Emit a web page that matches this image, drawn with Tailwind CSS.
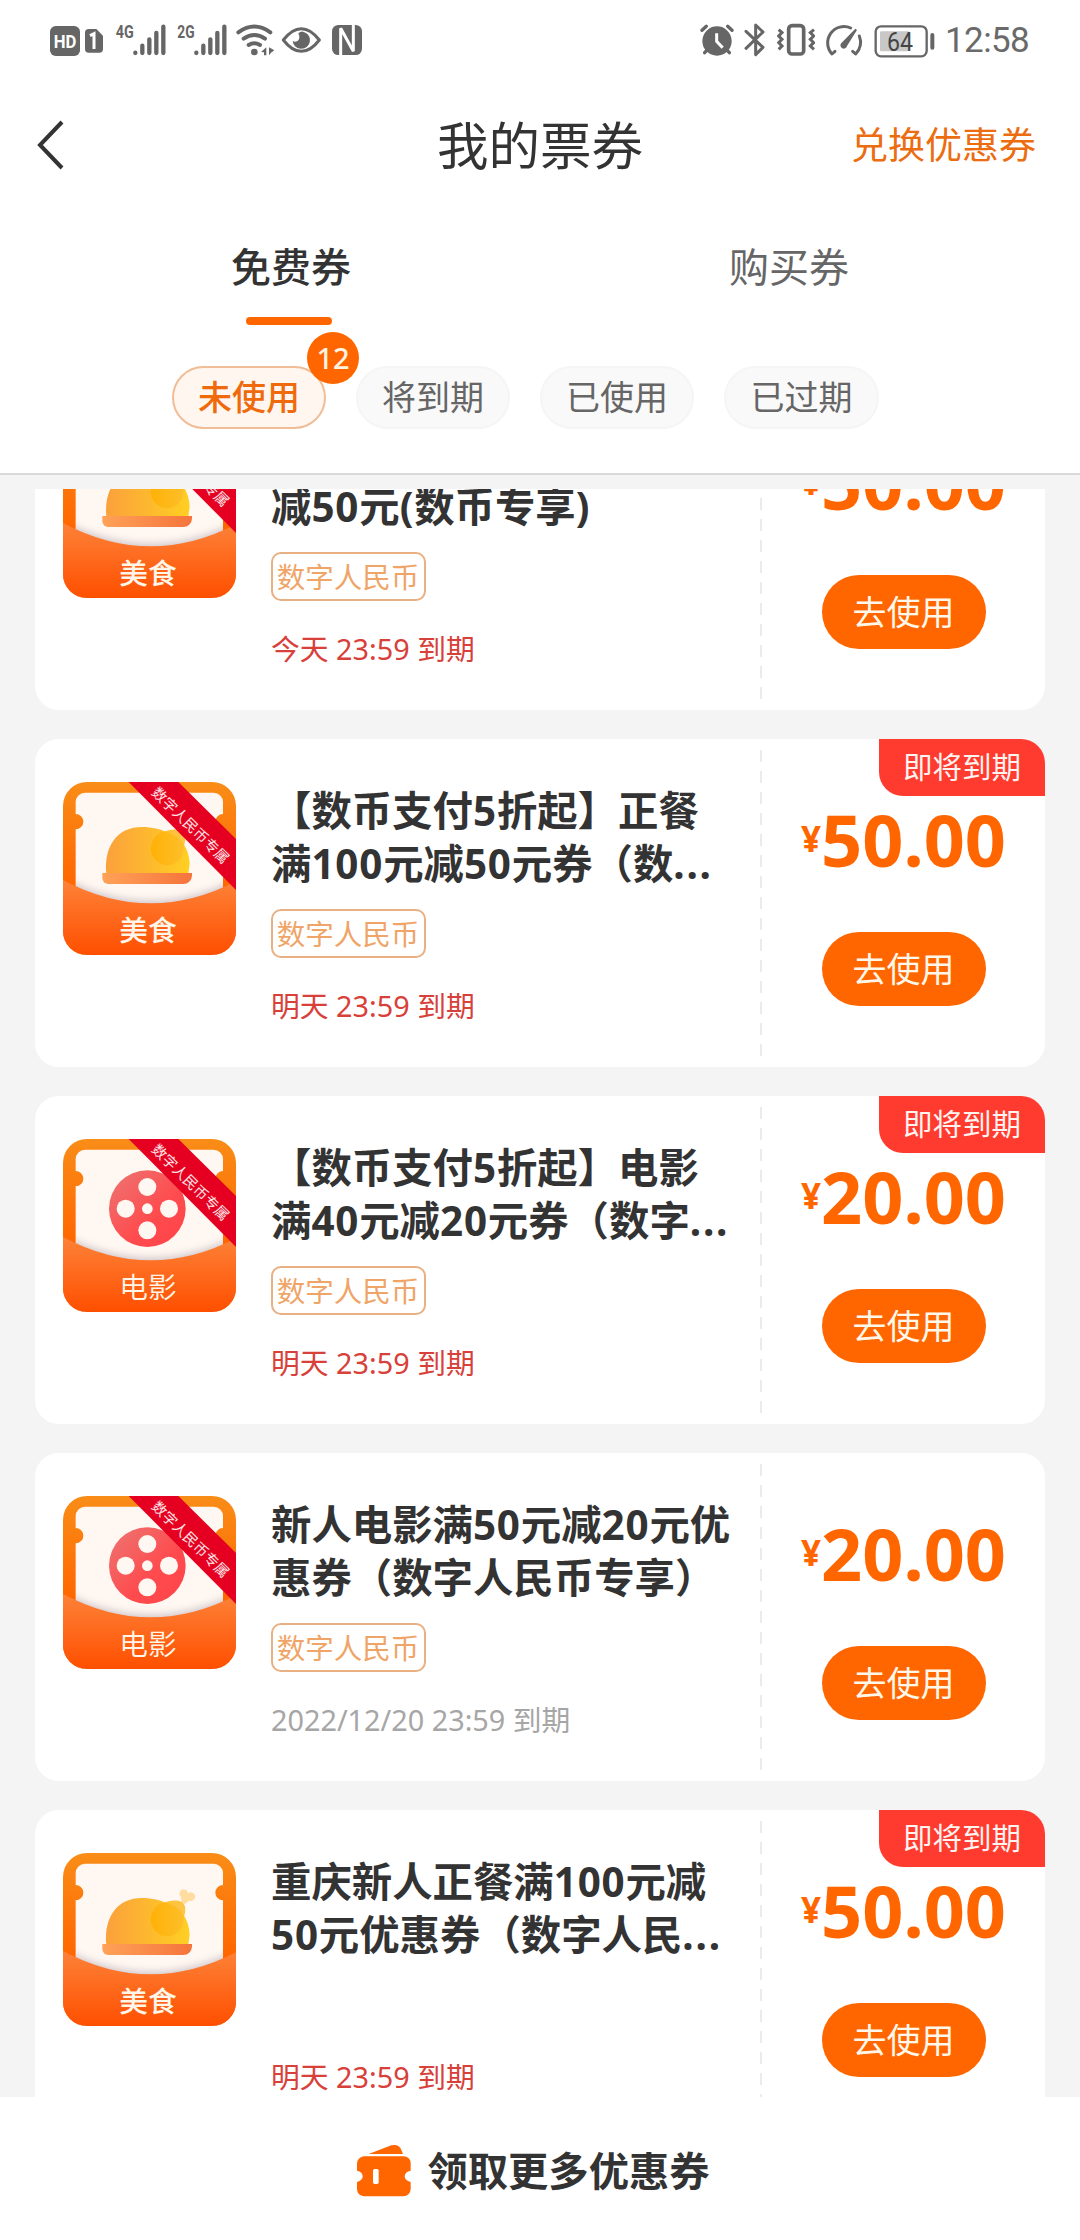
<!DOCTYPE html>
<html lang="zh-CN">
<head>
<meta charset="utf-8">
<title>我的票券</title>
<script src="https://cdn.jsdelivr.net/npm/@tailwindcss/browser@4"></script>
</head>
<body class="bg-white">
<svg width="0" height="0" class="absolute" aria-hidden="true">
  <defs>
    <linearGradient id="frame" x1="0" y1="0" x2="0" y2="1"><stop offset="0" stop-color="#f98d17"/><stop offset=".6" stop-color="#ff6600"/></linearGradient>
    <linearGradient id="pocket" x1="0" y1="0" x2="0" y2="1"><stop offset="0" stop-color="#fd8238"/><stop offset="1" stop-color="#ff4f00"/></linearGradient>
    <linearGradient id="bird" x1="0" y1="0" x2="1" y2="0"><stop offset="0" stop-color="#fba13c"/><stop offset="1" stop-color="#ffcf22"/></linearGradient>
    <linearGradient id="leg" x1="0" y1="0" x2="1" y2="0"><stop offset="0" stop-color="#ffb000"/><stop offset="1" stop-color="#fdbd2c"/></linearGradient>
    <linearGradient id="plate" x1="0" y1="0" x2="1" y2="0"><stop offset="0" stop-color="#ffa257"/><stop offset="1" stop-color="#f5743c"/></linearGradient>
    <linearGradient id="reel" x1="0" y1="0" x2="1" y2="1"><stop offset="0" stop-color="#ec7673"/><stop offset=".6" stop-color="#ff4b4e"/><stop offset="1" stop-color="#ff4448"/></linearGradient>
    <filter id="soft" x="-10%" y="-30%" width="120%" height="160%"><feGaussianBlur stdDeviation="12"/></filter>
    <clipPath id="tile"><rect width="519" height="519" rx="72"/></clipPath>
    <clipPath id="ticketclip"><path d="M66 32H452A28 28 0 0 1 480 60V96A23 23 0 0 0 480 142V519H38V142A23 23 0 0 0 38 96V60A28 28 0 0 1 66 32Z"/></clipPath>
    <symbol id="base" viewBox="0 0 519 519">
      <rect width="519" height="519" fill="url(#frame)"/>
      <path d="M66 32H452A28 28 0 0 1 480 60V96A23 23 0 0 0 480 142V519H38V142A23 23 0 0 0 38 96V60A28 28 0 0 1 66 32Z" fill="#fff8f2"/>
    </symbol>
    <symbol id="food" viewBox="0 0 519 519">
      <path d="M356 150L354 132A13 13 0 1 1 375 121A13 13 0 1 1 378 143L366 153Z" fill="#ffdda0"/>
      <path d="M130 275C122 190 165 135 236 135C270 135 292 142 310 150C350 160 378 195 380 245L376 275Z" fill="url(#bird)"/>
      <path d="M300 150C318 143 340 139 356 147C370 155 369 175 362 195C362 228 340 250 313 250A51 51 0 0 1 263 199C264 172 285 152 300 150Z" fill="url(#leg)" opacity=".85"/>
      <path d="M118 273H387V280A26 26 0 0 1 361 306H136A18 18 0 0 1 118 288Z" fill="url(#plate)"/>
    </symbol>
    <symbol id="film" viewBox="0 0 519 519">
      <circle cx="253" cy="209" r="115" fill="url(#reel)"/>
      <g fill="#fff8f2"><circle cx="253" cy="144" r="27"/><circle cx="188" cy="209" r="27"/><circle cx="318" cy="209" r="27"/><circle cx="253" cy="274" r="27"/><circle cx="253" cy="209" r="16"/></g>
    </symbol>
    <symbol id="flap" viewBox="0 0 519 519">
      <g clip-path="url(#ticketclip)"><path d="M0 290Q260 425 519 294V519H0Z" fill="#7a6a80" opacity=".4" filter="url(#soft)"/></g>
      <path d="M0 294Q260 432 519 298V519H0Z" fill="url(#pocket)"/>
    </symbol>
    <symbol id="bars" viewBox="0 0 100 96">
      <g stroke="#666" stroke-width="13" stroke-linecap="round"><path d="M8 87V88M29 66V88M50 47V88M71 28V88M92 9V88"/></g>
    </symbol>
  </defs>
</svg>

<div class="flex h-[2240px] w-[1080px] flex-col overflow-hidden bg-white font-['Noto_Sans','Noto_Sans_CJK_SC',sans-serif] text-[#333]">
  <!-- status bar -->
  <div class="flex h-[80px] shrink-0 items-center justify-between pr-[50px] pl-[50px]">
    <div class="flex items-center">
      <svg class="h-9 w-[30px]" viewBox="60 66 90 108"><rect x="60" y="78" width="90" height="90" rx="17" fill="#666"/><text x="105" y="143" text-anchor="middle" textLength="68" lengthAdjust="spacingAndGlyphs" font-family="Roboto" font-weight="700" font-size="54" fill="#fff">HD</text></svg>
      <svg class="ml-[5px] h-9 w-[18px]" viewBox="164 66 54 108"><path d="M175 87H198L218 107V147Q218 158 207 158H175Q164 158 164 147V98Q164 87 175 87Z" fill="#666"/><path d="M179 107L191 101V147" fill="none" stroke="#fff" stroke-width="9"/></svg>
      <svg class="ml-[12px] h-9 w-[52px]" viewBox="254 66 156 108"><text x="256" y="114" textLength="54" lengthAdjust="spacingAndGlyphs" font-family="Roboto" font-weight="700" font-size="54" fill="#666">4G</text><use href="#bars" x="307" y="71" width="100" height="96"/></svg>
      <svg class="ml-[10px] h-9 w-[51px]" viewBox="440 66 153 108"><text x="441" y="114" textLength="52" lengthAdjust="spacingAndGlyphs" font-family="Roboto" font-weight="700" font-size="54" fill="#666">2G</text><use href="#bars" x="490" y="71" width="100" height="96"/></svg>
      <svg class="ml-[8px] h-9 w-[39px]" viewBox="617 66 117 108"><g fill="none" stroke="#666" stroke-width="12" stroke-linecap="round"><path d="M624 97Q672 62 720 97M640 116Q672 94 704 116M655 135Q672 124 689 135"/></g><circle cx="672" cy="156" r="10" fill="#666"/><path d="M692 156L708 142V166H701V157ZM732 151L716 142V166L722 158Z" fill="#666"/></svg>
      <svg class="ml-[6px] h-9 w-[40px]" viewBox="752 66 120 108"><path d="M759 120Q785 86 813 86Q841 86 867 120Q841 154 813 154Q785 154 759 120Z" fill="none" stroke="#666" stroke-width="9" stroke-linejoin="round"/><path d="M818 95A26 26 0 1 1 787 122Q792 127 800 124Q812 117 804 100Q810 94 818 95Z" fill="#666"/></svg>
      <svg class="ml-[10px] h-9 w-[32px]" viewBox="902 66 96 108"><rect x="905" y="75" width="90" height="90" rx="19" fill="#666"/><path d="M931 165V85L969 154V75" fill="none" stroke="#fff" stroke-width="9"/></svg>
    </div>
    <div class="flex items-center">
      <svg class="h-9 w-[34px]" viewBox="57 66 102 108"><circle cx="108" cy="123" r="44" fill="#666"/><path d="M63 91L76 79M153 91L140 79M80 148L71 158M136 148L145 158" stroke="#666" stroke-width="10" stroke-linecap="round"/><path d="M107 100V124L125 143" fill="none" stroke="#fff" stroke-width="9"/></svg>
      <svg class="ml-[10px] h-9 w-[22px]" viewBox="189 66 66 108"><path d="M195 94L246 142L224 164V75L246 96L195 145" fill="none" stroke="#666" stroke-width="9" stroke-linecap="round" stroke-linejoin="round"/></svg>
      <svg class="ml-[11px] h-9 w-[38px]" viewBox="288 66 114 108"><rect x="323" y="77" width="45" height="85" rx="10" fill="none" stroke="#666" stroke-width="11"/><path d="M293 89L303 98L293 108L303 118L293 128L303 138L293 148M399 89L388 98L398 108L388 118L398 128L388 138L399 148" fill="none" stroke="#666" stroke-width="9"/></svg>
      <svg class="ml-[10px] h-9 w-[38px]" viewBox="432 66 114 108"><g fill="none" stroke="#666" stroke-width="9" stroke-linecap="round" stroke-linejoin="round"><path d="M509 84A49 49 0 0 0 453 162L462 154M535 108A49 49 0 0 1 524 162L515 154"/></g><path d="M523 86L528 90L498 138A10 10 0 1 1 482 128Z" fill="#666"/></svg>
      <svg class="ml-[11px] h-9 w-[62px]" viewBox="579 66 186 108"><rect x="584" y="79" width="153" height="90" rx="16" fill="none" stroke="#666" stroke-width="7"/><rect x="597" y="94" width="88" height="60" rx="4" fill="#c8c8c8"/><rect x="748" y="99" width="12" height="50" rx="6" fill="#666"/><text x="657" y="152" text-anchor="middle" textLength="78" lengthAdjust="spacingAndGlyphs" font-family="Roboto" font-size="76" fill="#444">64</text></svg>
      <span class="ml-[9px] w-[85px] pt-[2px] font-[Roboto] text-[35px] leading-[40px] tracking-[-0.6px] whitespace-nowrap text-[#6a6a6a]">12:58</span>
    </div>
  </div>

  <!-- title bar -->
  <div class="grid h-[130px] shrink-0 grid-cols-[1fr_auto_1fr] items-center pr-[44px] pl-[36px]">
    <svg class="h-[50px] w-[28px]" viewBox="0 0 28 50" fill="none" stroke="#333" stroke-width="4"><path d="M26 2L4 25L26 48"/></svg>
    <h1 class="pl-[8px] text-[51.5px] leading-[60px] font-normal">我的票券</h1>
    <a class="justify-self-end text-[37px] leading-[44px] text-[#ec6c10]">兑换优惠券</a>
  </div>

  <!-- tabs -->
  <div class="flex h-[115px] shrink-0 px-[42px]">
    <div class="flex w-[498px] flex-col items-center pt-[27px]">
      <span class="text-[40px] leading-[60px] font-medium">免费券</span>
      <span class="mt-[20px] mr-[4px] h-[8px] w-[86px] rounded-full bg-[#ff6600]"></span>
    </div>
    <div class="flex w-[498px] flex-col items-center pt-[27px]">
      <span class="text-[40px] leading-[60px] text-[#666]">购买券</span>
    </div>
  </div>

  <!-- filters -->
  <div class="flex h-[150px] shrink-0 gap-[30px] border-b-2 border-[#d9d9d9] pt-[41px] pl-[172px] text-[34px] text-[#666]">
    <div class="relative flex h-[63px] w-[154px] items-center justify-center rounded-full border-2 border-[#f0bd97] bg-[#fff6ef] font-medium text-[#ee6a0c]">未使用
      <span class="absolute -top-[36px] -right-[35px] flex size-[52px] items-center justify-center rounded-full bg-[#ff6600] text-[29px] text-[#fff3e2]">12</span>
    </div>
    <div class="flex h-[63px] w-[154px] items-center justify-center rounded-full border-2 border-[#f5f5f5] bg-[#f9f9f9]">将到期</div>
    <div class="flex h-[63px] w-[154px] items-center justify-center rounded-full border-2 border-[#f5f5f5] bg-[#f9f9f9]">已使用</div>
    <div class="flex h-[63px] w-[155px] items-center justify-center rounded-full border-2 border-[#f5f5f5] bg-[#f9f9f9]">已过期</div>
  </div>

  <!-- coupon list -->
  <div class="h-[1622px] shrink-0 bg-[#f4f4f4] px-[35px] pt-[14px]">
    <div class="h-[1608px] overflow-hidden">
      <div id="list" class="-mt-[107px] flex flex-col gap-[29px]"></div>
    </div>
  </div>

  <!-- footer -->
  <div class="flex h-[143px] shrink-0 items-center justify-center pt-[4px] pr-[14px]">
    <svg class="h-[54px] w-[56px]" viewBox="170 186 168 162"><path d="M208 216L276 190Q300 184 307 206L311 216Z" fill="#ff6600"/><path d="M194 223H314Q334 225 334 245V266Q316 270 316 283Q316 296 334 300V322Q332 342 312 343H194Q174 341 173 321V300Q190 296 190 283Q190 270 173 266V245Q175 225 194 223Z" fill="#ff6600"/><rect x="221" y="261" width="17" height="45" rx="5" fill="#fff"/></svg>
    <span class="ml-[15px] text-[40.3px] leading-[60px] font-bold">领取更多优惠券</span>
  </div>
</div>

<script>
const coupons = [
  { art: 'food', label: '美食', ribbon: true,  title: ['&nbsp;', '减50元(数币专享)'], tag: true, date: '今天 23:59 到期', price: '50.00' },
  { art: 'food', label: '美食', ribbon: true,  title: ['【数币支付5折起】正餐', '满100元减50元券（数...'], tag: true, date: '明天 23:59 到期', price: '50.00', soon: true },
  { art: 'film', label: '电影', ribbon: true,  title: ['【数币支付5折起】电影', '满40元减20元券（数字...'], tag: true, date: '明天 23:59 到期', price: '20.00', soon: true },
  { art: 'film', label: '电影', ribbon: true,  title: ['新人电影满50元减20元优', '惠券（数字人民币专享）'], tag: true, date: '2022/12/20 23:59 到期', later: true, price: '20.00' },
  { art: 'food', label: '美食', ribbon: false, title: ['重庆新人正餐满100元减', '50元优惠券（数字人民...'], tag: false, date: '明天 23:59 到期', price: '50.00', soon: true },
];
// Latin runs inside titles are set slightly looser than the Chinese text.
const loosen = s => s
  .replace(/\d+|[()]/g, '<span class="tracking-[0.8px]">$&</span>')
  .replace('...', '<span class="tracking-[1.8px]">...</span>');
document.getElementById('list').innerHTML = coupons.map(c => `
  <article class="relative flex h-[328px] shrink-0 rounded-[24px] bg-white pl-[28px]">
    <svg class="mt-[43px] size-[173px] shrink-0" viewBox="0 0 519 519">
      <g clip-path="url(#tile)">
        <use href="#base" width="519" height="519"/>
        <use href="#${c.art}" width="519" height="519"/>
        <use href="#flap" width="519" height="519"/>
        <text x="255" y="477" text-anchor="middle" font-size="86" font-weight="${c.art === 'food' ? 500 : 350}" fill="#fff6e9">${c.label}</text>
        ${c.ribbon ? `<path d="M197 0H346L519 171V324Z" fill="#e50022"/>
        <text transform="translate(383 130) rotate(44.6)" y="16" text-anchor="middle" font-size="43.5" fill="#ffe3e3">数字人民币专属</text>` : ''}
      </g>
    </svg>
    <div class="flex w-[524px] shrink-0 flex-col items-start pt-[45px] pl-[35px]">
      <h2 class="text-[40.4px] leading-[53px] font-bold whitespace-nowrap">${c.title.map(loosen).join('<br>')}</h2>
      <div class="mt-[19px] h-[49px]">${c.tag ? '<span class="flex h-[49px] w-[155px] items-center justify-center rounded-[10px] border-2 border-[#e9b083] pt-[2px] pr-[1px] text-[28.5px] whitespace-nowrap text-[#efa568]">数字人民币</span>' : ''}</div>
      <p class="mt-[28px] text-[28.8px] leading-[40px] whitespace-nowrap ${c.later ? 'text-[#a6a6a6]' : 'text-[#d8403a]'}">${c.date}</p>
    </div>
    <div class="h-[306px] w-[2px] shrink-0 self-center bg-[repeating-linear-gradient(to_bottom,#ebebeb_0px,#ebebeb_12px,transparent_12px,transparent_21px)]"></div>
    <div class="flex flex-1 flex-col items-center pt-[60px]">
      <div class="flex h-[80px] items-center font-bold text-[#ff6600]">
        <span class="mb-[2px] text-[35px] leading-none">¥</span><span class="text-[72px] leading-none">${c.price}</span>
      </div>
      <button class="mt-[53px] h-[74px] w-[164px] rounded-full bg-[#ff6600] text-[34px] text-[#fff8ea]">去使用</button>
    </div>
    ${c.soon ? '<span class="absolute top-0 right-0 flex h-[57px] w-[166px] items-center justify-center rounded-tr-[24px] rounded-bl-[24px] bg-[#ff3b30] text-[29.5px] text-[#fff3f0]">即将到期</span>' : ''}
  </article>`).join('');
</script>
</body>
</html>
